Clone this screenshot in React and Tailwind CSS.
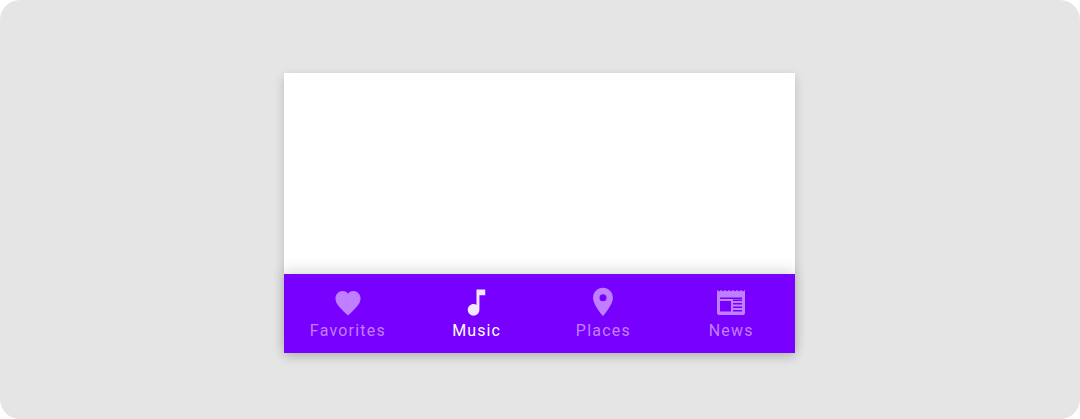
const items = [
  {
    label: "Favorites",
    icon: (
      <svg className="w-[32px] h-[32px]" viewBox="0 0 24 24" fill="currentColor">
        <path d="M12 21.35l-1.45-1.32C5.4 15.36 2.6 12.28 2.6 8.5 2.6 5.42 5 3 8.1 3c1.74 0 3.41.81 3.9 2.09C12.49 3.81 14.16 3 15.9 3c3.1 0 5.5 2.42 5.5 5.5 0 3.78-2.8 6.86-7.95 11.54L12 21.35z" />
      </svg>
    ),
  },
  {
    label: "Music",
    active: true,
    icon: (
      <svg className="w-[35px] h-[35px]" viewBox="0 0 24 24" fill="currentColor">
        <path d="M12 3v10.55c-.59-.34-1.27-.55-2-.55-2.21 0-4 1.79-4 4s1.79 4 4 4 4-1.79 4-4V7h4V3h-6z" />
      </svg>
    ),
  },
  {
    label: "Places",
    icon: (
      <svg className="w-[34px] h-[34px]" viewBox="0 0 24 24" fill="currentColor">
        <path d="M12 2C8.13 2 5 5.13 5 9c0 5.25 7 13 7 13s7-7.75 7-13c0-3.87-3.13-7-7-7zm0 9.5a2.5 2.5 0 0 1 0-5 2.5 2.5 0 0 1 0 5z" />
      </svg>
    ),
  },
  {
    label: "News",
    icon: (
      <svg className="mb-[4px] w-[28px] h-[25px]" viewBox="0 0 28 25" fill="currentColor">
        <path
          fillRule="evenodd"
          d="M0 0l2 1.5L4 0l2 1.5L8 0l2 1.5L12 0l2 1.5L16 0l2 1.5L20 0l2 1.5L24 0l2 1.5L28 0v23a2 2 0 0 1-2 2H2a2 2 0 0 1-2-2V0zM3 11v10.5h11V11H3zM16 9.5V11h9V9.5h-9zM16 13v1.5h9V13h-9zM16 16.5V18h9v-1.5h-9zM16 20v1.5h9V20h-9zM3 7.5V9h22V7.5H3z"
        />
      </svg>
    ),
  },
];

export default function App() {
  return (
    <div className="h-[419px] w-[1080px] bg-white font-['Roboto',sans-serif]">
      <div className="h-full rounded-[20px] bg-[#e5e5e5] pl-[284px] pt-[73px]">
        <div className="flex h-[280px] w-[511px] flex-col bg-white shadow-[0_4px_10px_rgba(0,0,0,0.18)]">
          <div className="flex-1" />
          {/* Bottom navigation */}
          <div className="grid h-[79px] grid-cols-4 bg-[#7800ff] shadow-[0_-4px_12px_rgba(0,0,0,0.14)]">
            {items.map((item) => (
              <div
                key={item.label}
                className={`flex flex-col items-center ${
                  item.active ? "ml-[2px] text-[#f3e6ff]" : "text-[#c07fff]"
                }`}
              >
                <div
                  className={`flex h-[47px] items-end justify-center ${
                    item.active ? "pb-[1px]" : "pb-[2px]"
                  }`}
                >
                  {item.icon}
                </div>
                <span
                  className={`text-[16px] leading-[20px] ${
                    item.active ? "text-white tracking-[1.1px]" : "tracking-[1.2px]"
                  }`}
                >
                  {item.label}
                </span>
              </div>
            ))}
          </div>
        </div>
      </div>
    </div>
  );
}
